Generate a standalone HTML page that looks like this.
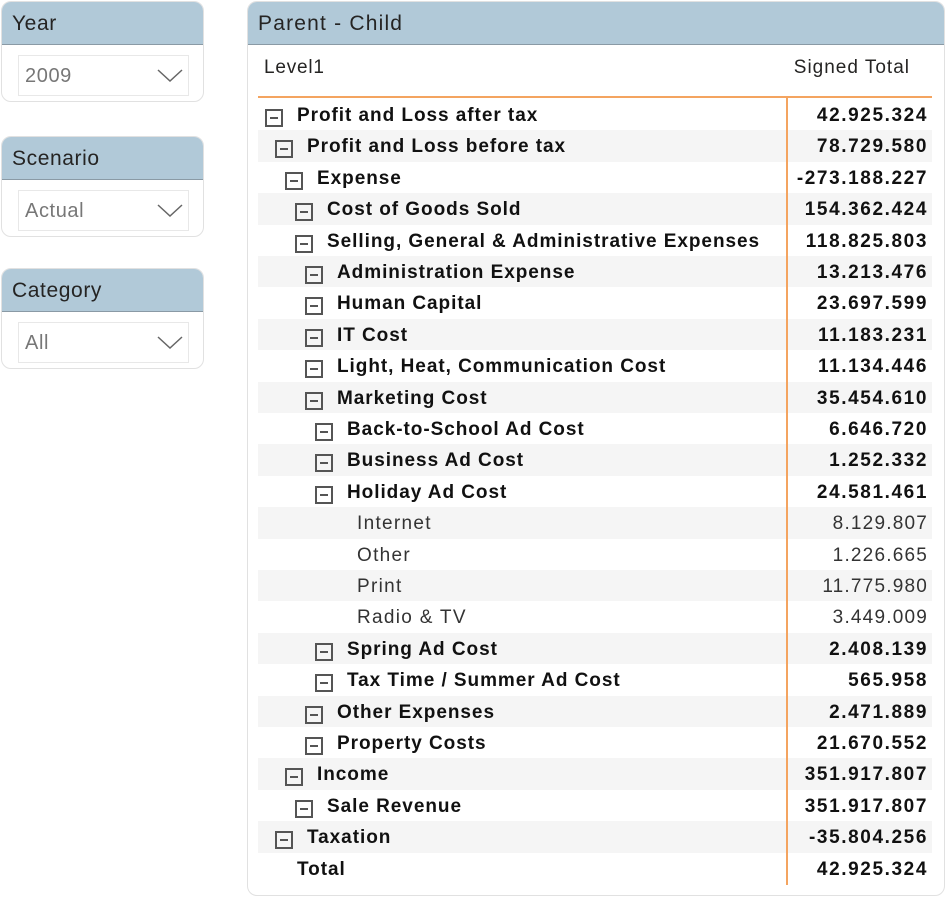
<!DOCTYPE html>
<html><head><meta charset="utf-8"><style>
*{margin:0;padding:0;box-sizing:border-box}
body{width:946px;height:897px;background:#fff;font-family:"Liberation Sans","DejaVu Sans",sans-serif;position:relative;overflow:hidden;color:#252423}
.sl{position:absolute;left:1px;width:203px;height:101px;border:1px solid #e1e1e1;border-radius:10px;overflow:hidden;background:#fff}
.sl .h{height:43px;background:#b1c9d8;border-bottom:1px solid #8a9aa5;font-size:21px;padding:10px 0 0 10px;color:#252423;letter-spacing:0.6px}
.sl .d{position:absolute;left:16px;top:53px;width:171px;height:41px;border:1px solid #e8e8e8;font-size:20px;color:#777;padding:9px 0 0 6px;letter-spacing:0.6px}
.sl .d svg{position:absolute;right:5px;top:12px}
.pn{position:absolute;left:247px;top:1px;width:698px;height:895px;border:1px solid #e1e1e1;border-radius:10px;overflow:hidden}
.pn .h{height:43px;background:#b1c9d8;border-bottom:1px solid #8a9aa5;font-size:21px;padding:10px 0 0 10px;letter-spacing:1.2px}
.r{position:absolute;left:10px;width:674px;height:32px;font-size:19px;font-weight:bold;color:#111}
.r.g{background:#f5f5f5}
.r .t{position:absolute;top:6px;white-space:nowrap;letter-spacing:0.95px}
.r .v{position:absolute;right:4px;top:6px;letter-spacing:1.6px}
.r .b{position:absolute;top:10px;width:18px;height:18px;border:2px solid #555}
.r .b:after{content:"";position:absolute;left:3px;right:3px;top:6px;height:2px;background:#555}
.r.n{font-weight:normal;color:#333}
.r.n .t{letter-spacing:1.3px}
.r.n .v{letter-spacing:1.2px}
</style></head><body>
<div class="sl" style="top:1px"><div class="h">Year</div><div class="d">2009<svg width="26" height="14"><path d="M1 2 L13 13 L25 2" fill="none" stroke="#666" stroke-width="1.5"/></svg></div></div>
<div class="sl" style="top:136px"><div class="h">Scenario</div><div class="d">Actual<svg width="26" height="14"><path d="M1 2 L13 13 L25 2" fill="none" stroke="#666" stroke-width="1.5"/></svg></div></div>
<div class="sl" style="top:268px"><div class="h">Category</div><div class="d">All<svg width="26" height="14"><path d="M1 2 L13 13 L25 2" fill="none" stroke="#666" stroke-width="1.5"/></svg></div></div>
<div class="pn"><div class="h">Parent - Child</div>
<div style="position:absolute;left:16px;top:55px;font-size:19px;letter-spacing:0.8px">Level1</div>
<div style="position:absolute;right:34px;top:55px;font-size:19px;letter-spacing:1px">Signed Total</div>
<div style="position:absolute;left:10px;top:94px;width:674px;height:2px;background:#f4a460"></div>
<div style="position:absolute;left:538px;top:94px;width:2px;height:789px;background:#f4a460;z-index:2"></div>
<div id="rows"></div>
</div>
<script>
var d=[[0,"Profit and Loss after tax","42.925.324"],[1,"Profit and Loss before tax","78.729.580"],[2,"Expense","-273.188.227"],[3,"Cost of Goods Sold","154.362.424"],[3,"Selling, General & Administrative Expenses","118.825.803"],[4,"Administration Expense","13.213.476"],[4,"Human Capital","23.697.599"],[4,"IT Cost","11.183.231"],[4,"Light, Heat, Communication Cost","11.134.446"],[4,"Marketing Cost","35.454.610"],[5,"Back-to-School Ad Cost","6.646.720"],[5,"Business Ad Cost","1.252.332"],[5,"Holiday Ad Cost","24.581.461"],[6,"Internet","8.129.807",1],[6,"Other","1.226.665",1],[6,"Print","11.775.980",1],[6,"Radio & TV","3.449.009",1],[5,"Spring Ad Cost","2.408.139"],[5,"Tax Time / Summer Ad Cost","565.958"],[4,"Other Expenses","2.471.889"],[4,"Property Costs","21.670.552"],[2,"Income","351.917.807"],[3,"Sale Revenue","351.917.807"],[1,"Taxation","-35.804.256"],[0,"Total","42.925.324",2]];
var h="";d.forEach(function(r,i){var y=Math.round(97+i*31.4);var hh=Math.round(97+(i+1)*31.4)-y;var c="r"+(i%2?" g":"")+(r[3]==1?" n":"");
h+='<div class="'+c+'" style="top:'+y+'px;height:'+hh+'px">'+(r[3]?'':'<div class="b" style="left:'+(7+10*r[0])+'px"></div>')+'<div class="t" style="left:'+(39+10*r[0])+'px">'+r[1].replace("&","&amp;")+'</div><div class="v">'+r[2]+'</div></div>';});
document.getElementById("rows").innerHTML=h;
</script>
</body></html>
